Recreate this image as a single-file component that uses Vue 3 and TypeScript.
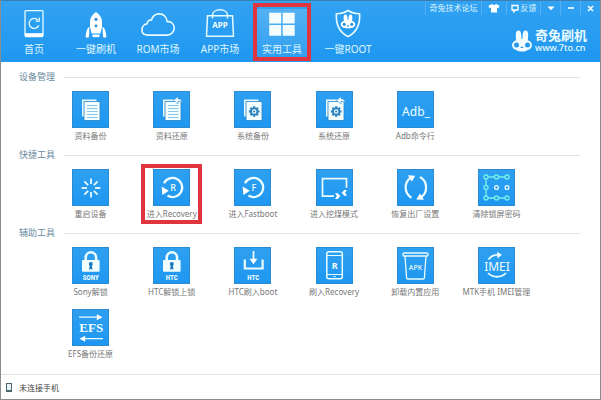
<script setup lang="ts">
interface NavItem {
  id: string
  label: string
}

interface Tool {
  icon: string
  label: string
  marked?: boolean
}

interface Section {
  title: string
  tools: Tool[]
}

const navItems: NavItem[] = [
  { id: 'home', label: '首页' },
  { id: 'flash', label: '一键刷机' },
  { id: 'rom', label: 'ROM市场' },
  { id: 'app', label: 'APP市场' },
  { id: 'tools', label: '实用工具' },
  { id: 'root', label: '一键ROOT' },
]

const activeNav = 'tools'

const sections: Section[] = [
  {
    title: '设备管理',
    tools: [
      { icon: 'data-backup', label: '资料备份' },
      { icon: 'data-restore', label: '资料还原' },
      { icon: 'system-backup', label: '系统备份' },
      { icon: 'system-restore', label: '系统还原' },
      { icon: 'adb', label: 'Adb命令行' },
    ],
  },
  {
    title: '快捷工具',
    tools: [
      { icon: 'reboot', label: '重启设备' },
      { icon: 'recovery', label: '进入Recovery', marked: true },
      { icon: 'fastboot', label: '进入Fastboot' },
      { icon: 'download', label: '进入挖煤模式' },
      { icon: 'factory', label: '恢复出厂设置' },
      { icon: 'pattern', label: '清除锁屏密码' },
    ],
  },
  {
    title: '辅助工具',
    tools: [
      { icon: 'sony', label: 'Sony解锁' },
      { icon: 'htc', label: 'HTC解锁上锁' },
      { icon: 'htc-boot', label: 'HTC刷入boot' },
      { icon: 'flash-recovery', label: '刷入Recovery' },
      { icon: 'uninstall', label: '卸载内置应用' },
      { icon: 'imei', label: 'MTK手机 IMEI管理' },
      { icon: 'efs', label: 'EFS备份还原' },
    ],
  },
]

const docLines = [14.5, 17.5, 20.5, 23.5, 26.5]
const spokes = [0, 45, 90, 135, 180, 225, 270, 315]
const teeth = [0, 45, 90, 135]
const linkedDots = [
  [8, 8],
  [18.5, 8],
  [29, 8],
  [8, 18.5],
  [8, 29],
  [18.5, 29],
  [29, 29],
]
</script>

<template>
  <div class="window">
    <header class="header">
      <nav class="nav">
        <button
          v-for="item in navItems"
          :key="item.id"
          type="button"
          class="nav-item"
          :class="[item.id, { active: item.id === activeNav }]"
        >
          <svg class="nav-icon" viewBox="0 0 30 30" fill="none" stroke="#e6fbff" aria-hidden="true">
            <template v-if="item.id === 'home'">
              <rect x="6" y="1.6" width="18" height="26" rx="1" stroke-width="1.3" />
              <path d="M6 24.2h18v3.4H6z" fill="#fff" stroke="none" />
              <path d="M19 11.2a5 5 0 1 0 .8 5" stroke-width="1.3" />
              <path d="M20.3 8.6v3.6h-3.6" stroke-width="1.2" />
            </template>
            <template v-else-if="item.id === 'flash'">
              <path
                d="M15 3c3.6 2.4 6 5.7 6 9.5v5.7l-1.6 6.3h-8.8L9 18.2v-5.7C9 8.7 11.400 5.400 15 3z"
                fill="#fff"
                stroke="none"
              />
              <path d="M8.300 17.500v5.500l-.5 5.500H4.700c0-5 1-8.500 3.600-11zM21.700 17.500v5.500l.5 5.500h3.100c0-5-1-8.500-3.600-11z" fill="#fff" stroke="none" />
              <path d="M11.500 25.500h7v2.600h-7z" fill="#fff" stroke="none" />
              <circle cx="15" cy="10.300" r="1.600" fill="#2b93dc" stroke="none" />
              <circle cx="15" cy="17" r="1.400" fill="#2b93dc" stroke="none" />
            </template>
            <template v-else-if="item.id === 'rom'">
              <path
                d="M-1 21.300c0-3.600 2-5.900 5.100-6.500.2-2.500 2-4.100 4.500-3.900 1-3.700 3.800-6 7.600-6 4.400 0 7.600 3.100 7.800 7.500 4.300.1 7.200 2.900 7.200 6.600 0 4-2.900 7.100-7.200 7.100H5c-3.800 0-6-1.900-6-4.800z"
                stroke-width="1.600"
              />
            </template>
            <template v-else-if="item.id === 'app'">
              <path d="M2.500 6.800h25l1 20.400h-27z" stroke-width="1.500" />
              <path d="M7.500 9.500V6.500c0-3.400 3.200-5.700 7.500-5.700s7.500 2.300 7.500 5.700v3" stroke-width="1.400" />
              <text x="15" y="18.800" class="glyph bag">APP</text>
            </template>
            <template v-else-if="item.id === 'tools'">
              <path d="M2.200 3.800h12v10.800h-12zM15.700 3.800h12v10.800h-12zM2.200 16h12v10.800h-12zM15.700 16h12v10.800h-12z" fill="#f4fdff" stroke="none" />
            </template>
            <template v-else>
              <path
                d="M15 1.500c3.500 2.300 7.600 3.200 11.600 3.200.6 9.900-2.100 18.200-11.600 22.800C5.500 22.900 2.800 14.600 3.400 4.700 7.400 4.700 11.500 3.800 15 1.500z"
                stroke-width="1.600"
              />
              <path d="M12.500 5.500c1.700 0 2.100 2.500 2.100 5.500h.8c0-3 .4-5.500 2.100-5.500 2.200 0 2.100 3.300 1.500 6.300 2.200.8 3.200 1.800 3.200 3.500 0 2.700-2.600 4-7.200 4s-7.200-1.300-7.200-4c0-1.700 1-2.700 3.200-3.500-.6-3-.7-6.300 1.500-6.300z" fill="#fff" stroke="none" />
              <path d="M13.500 17.600 15 16l1.500 1.600z" fill="#238fdc" stroke="none" />
              <circle cx="11.200" cy="15.300" r="1.500" fill="#238fdc" stroke="none" />
              <circle cx="18.800" cy="15.300" r="1.500" fill="#238fdc" stroke="none" />
            </template>
          </svg>
          <span>{{ item.label }}</span>
        </button>
      </nav>

      <div class="header-side">
        <div class="window-bar">
          <a href="#" class="bar-item forum">奇兔技术论坛</a>
          <button type="button" class="bar-item skin" aria-label="换肤">
            <svg width="12" height="10" viewBox="0 0 12 10" aria-hidden="true">
              <path d="M4 1c1 1.200 3 1.200 4 0l3.600 1.700-1.100 2.600-1.500-.5V9.500H3V4.800l-1.500.5L.4 2.700z" fill="#fff" />
            </svg>
          </button>
          <button type="button" class="bar-item feedback">
            <svg width="8" height="9" viewBox="0 0 8 9" aria-hidden="true">
              <path d="M1 1.500h6v4.500H4.200L2.800 7.800V6H1z" fill="none" stroke="#fff" stroke-width="1.300" />
            </svg>
            <span>反馈</span>
          </button>
          <button type="button" class="bar-item control" aria-label="菜单">
            <svg width="8" height="6" viewBox="0 0 8 6" aria-hidden="true"><path d="M.5 1.500h7L4 5.300z" fill="#fff" /></svg>
          </button>
          <button type="button" class="bar-item control" aria-label="最小化">
            <svg width="8" height="6" viewBox="0 0 8 6" aria-hidden="true"><path d="M1 2.200h6v1.600H1z" fill="#fff" /></svg>
          </button>
          <button type="button" class="bar-item control" aria-label="关闭">
            <svg width="7" height="7" viewBox="0 0 7 7" aria-hidden="true"><path d="m1 1 5 5M6 1 1 6" stroke="#fff" stroke-width="1.500" /></svg>
          </button>
        </div>

        <div class="brand">
          <svg width="20" height="22" viewBox="0 0 20 22" aria-hidden="true">
            <path
              d="M6.500.5c2.500 0 2.900 3.500 3 8.300h1C10.600 4 11 .5 13.500.5c3.100 0 3 5 2.300 9.800 2.700.8 4.100 2.600 4.100 5 0 2.700-1.900 4.300-4.300 4.600-1.300 1.200-3.300 1.700-5.600 1.700s-4.300-.5-5.600-1.700C2 19.600.1 18 .1 15.300c0-2.400 1.400-4.200 4.100-5C3.500 5.500 3.400.5 6.500.5z"
              fill="#f2fcff"
            />
            <circle cx="4.500" cy="15" r="2.500" fill="#2499ee" />
            <circle cx="15.500" cy="15" r="2.500" fill="#2499ee" />
            <path d="M8.200 18 10 16.200l1.800 1.800z" fill="#2499ee" />
          </svg>
          <div class="brand-text">
            <strong>奇兔刷机</strong>
            <span>www.7to.cn</span>
          </div>
        </div>
      </div>
    </header>

    <main class="content">
      <section v-for="section in sections" :key="section.title" class="section">
        <h2>{{ section.title }}</h2>
        <div class="grid">
          <button
            v-for="tool in section.tools"
            :key="tool.icon"
            type="button"
            class="tool"
            :class="{ marked: tool.marked }"
          >
            <svg class="tile" viewBox="0 0 37 37" fill="none" stroke="#eafcff" aria-hidden="true">
              <template v-if="['data-backup', 'data-restore', 'system-backup', 'system-restore'].includes(tool.icon)">
                <path d="M10 8.500h14.500v17H10z" fill="#e6faff" stroke="none" />
                <path d="M12 10.500h16v19H12z" fill="#f4feff" stroke="#2583c8" stroke-width=".8" />
                <template v-if="tool.icon.startsWith('data')">
                  <path v-for="y in docLines" :key="y" :d="`M15 ${y}h10.500`" stroke="#8cc6e6" stroke-width="1" />
                </template>
                <template v-else>
                  <path
                    v-for="angle in teeth"
                    :key="angle"
                    d="M20.200 15.200v10.600"
                    stroke="#2d83bd"
                    stroke-width="2.200"
                    :transform="`rotate(${angle} 20.200 20.500)`"
                  />
                  <circle cx="20.200" cy="20.500" r="3.200" fill="#f2fdff" stroke="#2d83bd" stroke-width="1.800" />
                  <circle cx="20.200" cy="20.500" r="1.100" fill="#2d83bd" stroke="none" />
                </template>
                <path
                  v-if="tool.icon.endsWith('restore')"
                  d="m20.500 9.300 4.500-3.800v2.300c2.500 0 4 1.300 4 4.200-1-1.200-2.100-1.600-4-1.600V13z"
                  fill="#f2fdff"
                  stroke="#2583c8"
                  stroke-width=".5"
                />
              </template>
              <text v-else-if="tool.icon === 'adb'" x="19" y="24.500" class="glyph adb">Adb_</text>
              <template v-else-if="tool.icon === 'reboot'">
                <path
                  v-for="angle in spokes"
                  :key="angle"
                  d="M19 15V9.600"
                  stroke-width="1.800"
                  :transform="`rotate(${angle} 19 19)`"
                />
              </template>
              <template v-else-if="tool.icon === 'recovery' || tool.icon === 'fastboot'">
                <path d="M10.900 14.300a9.600 9.600 0 1 1 3.600 12.300" stroke-width="2.300" />
                <path d="m8.600 17.400 7.200 4.400-6.400 4.200z" fill="#fff" stroke="none" />
                <text x="20" y="21.800" class="glyph letter">{{ tool.icon === 'recovery' ? 'R' : 'F' }}</text>
              </template>
              <template v-else-if="tool.icon === 'download'">
                <path d="M18 27.200H6.500V9.700h24v9" stroke-width="1.700" />
                <path d="M19 24.300h2.700l2.700 2.700-2.700 3H19l1.900-3zM31 21h-2.700l-2.700 2.700 2.700 3H31l-1.900-3z" fill="#fff" stroke="none" />
              </template>
              <template v-else-if="tool.icon === 'factory'">
                <path d="M14.500 28.800A12 12 0 0 1 14.300 8.300M23 8A12 12 0 0 1 23.500 28.600" stroke-width="2.200" />
                <path d="m10.800 6.200 7.400.6-3.400 5.700zM27 30.700l-7.700-.2 3.600-6z" fill="#fff" stroke="none" />
              </template>
              <template v-else-if="tool.icon === 'pattern'">
                <path d="M29 8H8v21h21" stroke="#76f1ea" stroke-width="1.300" />
                <circle
                  v-for="dot in linkedDots"
                  :key="dot.join('-')"
                  :cx="dot[0]"
                  :cy="dot[1]"
                  r="2"
                  fill="#2a9bea"
                  stroke="#76f1ea"
                  stroke-width="1.300"
                />
                <circle cx="18.500" cy="18.500" r="1.900" stroke-width="1.300" />
                <circle cx="29" cy="18.500" r="1.900" stroke-width="1.300" />
              </template>
              <template v-else-if="tool.icon === 'sony' || tool.icon === 'htc'">
                <path d="M13.700 14V10.500a5.200 5.200 0 0 1 10.400 0V14" stroke-width="2.600" />
                <rect x="10" y="13" width="17.600" height="11.800" rx="1" fill="#f2fdff" stroke="none" />
                <circle cx="18.800" cy="17" r="2" fill="#1c78be" stroke="none" />
                <path d="M18 17.500h1.600l.9 4.700h-3.400z" fill="#1c78be" stroke="none" />
                <text x="18.800" y="33" class="glyph maker">{{ tool.icon === 'sony' ? 'SONY' : 'HTC' }}</text>
              </template>
              <template v-else-if="tool.icon === 'htc-boot'">
                <path d="M10.800 12.500v9h17.800v-9" stroke-width="2.200" />
                <path d="M19.500 4v9" stroke-width="1.800" />
                <path d="M15.500 11.800h8l-4 5.400z" fill="#fff" stroke="none" />
                <text x="19.300" y="32.500" class="glyph maker">HTC</text>
              </template>
              <template v-else-if="tool.icon === 'flash-recovery'">
                <rect x="10.800" y="4.700" width="15.500" height="27" rx="2" stroke-width="1.500" />
                <path d="M10.800 8.500h15.500M10.800 27.500h15.500" stroke-width="1.200" />
                <path d="M17 29.600h3" stroke-width=".8" />
                <text x="18.600" y="21.500" class="glyph phone">R</text>
              </template>
              <template v-else-if="tool.icon === 'uninstall'">
                <rect x="6" y="6" width="25" height="3" rx="1" stroke-width="1.300" />
                <path d="m8 9 1.600 22q.1 1 1 1h15.800q.9 0 1-1L29 9" stroke-width="1.300" />
                <text x="18.500" y="22.800" class="glyph apk">APK</text>
              </template>
              <template v-else-if="tool.icon === 'imei'">
                <path d="M10.500 12.500a11 11 0 0 1 8.800-4.700M28 26a11.500 10 0 0 1-18 0" stroke-width="1.800" />
                <path d="m19 4.700 4.800 3-4.200 3.700z" fill="#fff" stroke="none" />
                <text x="19" y="23.500" class="glyph imei">IMEI</text>
              </template>
              <template v-else>
                <path d="M7 8.200h19M12 29.700h19" stroke-width="1.300" />
                <path d="M24.800 5.200 30.500 8.200l-5.700 3zM13.200 26.700 7.500 29.700l5.700 3z" fill="#fff" stroke="none" />
                <text x="19.200" y="23.300" class="glyph efs">EFS</text>
              </template>
            </svg>
            <span class="tool-label">{{ tool.label }}</span>
          </button>
        </div>
      </section>
    </main>

    <footer class="status">
      <svg width="6" height="9" viewBox="0 0 6 9" aria-hidden="true">
        <rect x=".5" y=".5" width="5" height="8" fill="#e9f2f6" stroke="#4b6472" />
        <path d="M.5 7h5v1.500h-5z" fill="#4b6472" />
      </svg>
      <span>未连接手机</span>
    </footer>
  </div>
</template>

<style>
body {
  margin: 0;
}
</style>

<style scoped>
.window {
  box-sizing: border-box;
  display: flex;
  flex-direction: column;
  min-height: 100vh;
  border: 1px solid #8b8e90;
  border-top: 0;
  background: #fff;
  font-family: 'Noto Sans', 'Noto Sans CJK SC', sans-serif;
}

button {
  margin: 0;
  padding: 0;
  border: 0;
  background: none;
  font-family: inherit;
  color: inherit;
}

.header {
  box-sizing: border-box;
  display: flex;
  justify-content: space-between;
  height: 62px;
  border-top: 1px solid #3c7eb0;
  background: linear-gradient(#32a2f2, #1f97f0);
  color: #dff6ff;
}

.nav {
  display: flex;
  padding-left: 2px;
}

.nav-item {
  position: relative;
  display: flex;
  flex-direction: column;
  align-items: center;
  width: 62px;
  padding-top: 8px;
  font-size: 10px;
  line-height: 14px;
  white-space: nowrap;
}

.nav-item.root {
  width: 70px;
}

.nav-item.active {
  background: linear-gradient(#5ab4f4, #2d9df0);
  background-clip: content-box;
  padding: 8px 3px 0;
}

.nav-item.active::after {
  content: '';
  position: absolute;
  inset: 2px 2px 1px;
  border: 4px solid #e0353f;
}

.nav-icon {
  width: 30px;
  height: 30px;
  margin-bottom: 3px;
  overflow: visible;
}

.header-side {
  display: flex;
  flex-direction: column;
  align-items: flex-end;
}

.window-bar {
  display: flex;
  height: 14px;
}

.bar-item {
  box-sizing: border-box;
  display: flex;
  align-items: center;
  justify-content: center;
  gap: 2px;
  border-left: 1px solid #56b1f3;
  color: #dff6ff;
  font-size: 8px;
  line-height: 14px;
  text-decoration: none;
  white-space: nowrap;
}

.forum {
  width: 56px;
}

.skin {
  width: 25px;
}

.feedback {
  width: 34px;
}

.control {
  width: 20px;
}

.brand {
  display: flex;
  align-items: center;
  gap: 3px;
  padding: 13px 13px 0 0;
}

.brand-text {
  display: flex;
  flex-direction: column;
  color: #e8faff;
}

.brand-text strong {
  font-size: 13px;
  line-height: 14px;
}

.brand-text span {
  font-size: 9px;
  font-weight: 500;
  line-height: 12px;
}

.content {
  flex: 1;
  padding-top: 9px;
}

.section h2 {
  display: flex;
  align-items: center;
  gap: 9px;
  margin: 0;
  padding: 0 20px 0 18px;
  color: #6a8ba0;
  font-size: 9px;
  font-weight: 400;
  line-height: 12px;
}

.section h2::after {
  content: '';
  flex: 1;
  height: 1px;
  background: #dbe5ea;
}

.grid {
  display: grid;
  grid-template-columns: repeat(6, 1fr);
  row-gap: 11px;
  padding: 8px 63px 7px 49px;
}

.tool {
  position: relative;
  display: flex;
  flex-direction: column;
  align-items: center;
  gap: 1px;
  color: #777;
  font-size: 8px;
  line-height: 13px;
  white-space: nowrap;
}

.tool.marked::after {
  content: '';
  position: absolute;
  inset: -5px 10px -4px;
  border: 4px solid #e0353f;
}

.tile {
  width: 37px;
  height: 37px;
  background: linear-gradient(#2fa0f0, #1e97f1);
  box-shadow: inset 0 0 0 1px #2b8bd2;
}

.glyph {
  fill: #f2fdff;
  stroke: none;
  text-anchor: middle;
}

.bag {
  font-size: 8px;
  font-weight: 700;
}

.adb {
  font-size: 12px;
}

.letter {
  font-size: 9px;
  font-weight: 500;
}

.maker {
  font-family: 'Liberation Sans Narrow', 'Roboto Condensed', 'Liberation Sans', sans-serif;
  font-size: 7px;
  font-weight: 700;
}

.phone {
  font-size: 9px;
  font-weight: 700;
}

.apk {
  font-size: 7px;
  font-weight: 500;
}

.imei {
  font-size: 12px;
}

.efs {
  font-family: 'Liberation Serif', serif;
  font-size: 13px;
  font-weight: 700;
}

.status {
  display: flex;
  align-items: center;
  gap: 7px;
  height: 24px;
  padding-left: 5px;
  border-top: 1px solid #dfe3e5;
  color: #444;
  font-size: 8px;
}
</style>
